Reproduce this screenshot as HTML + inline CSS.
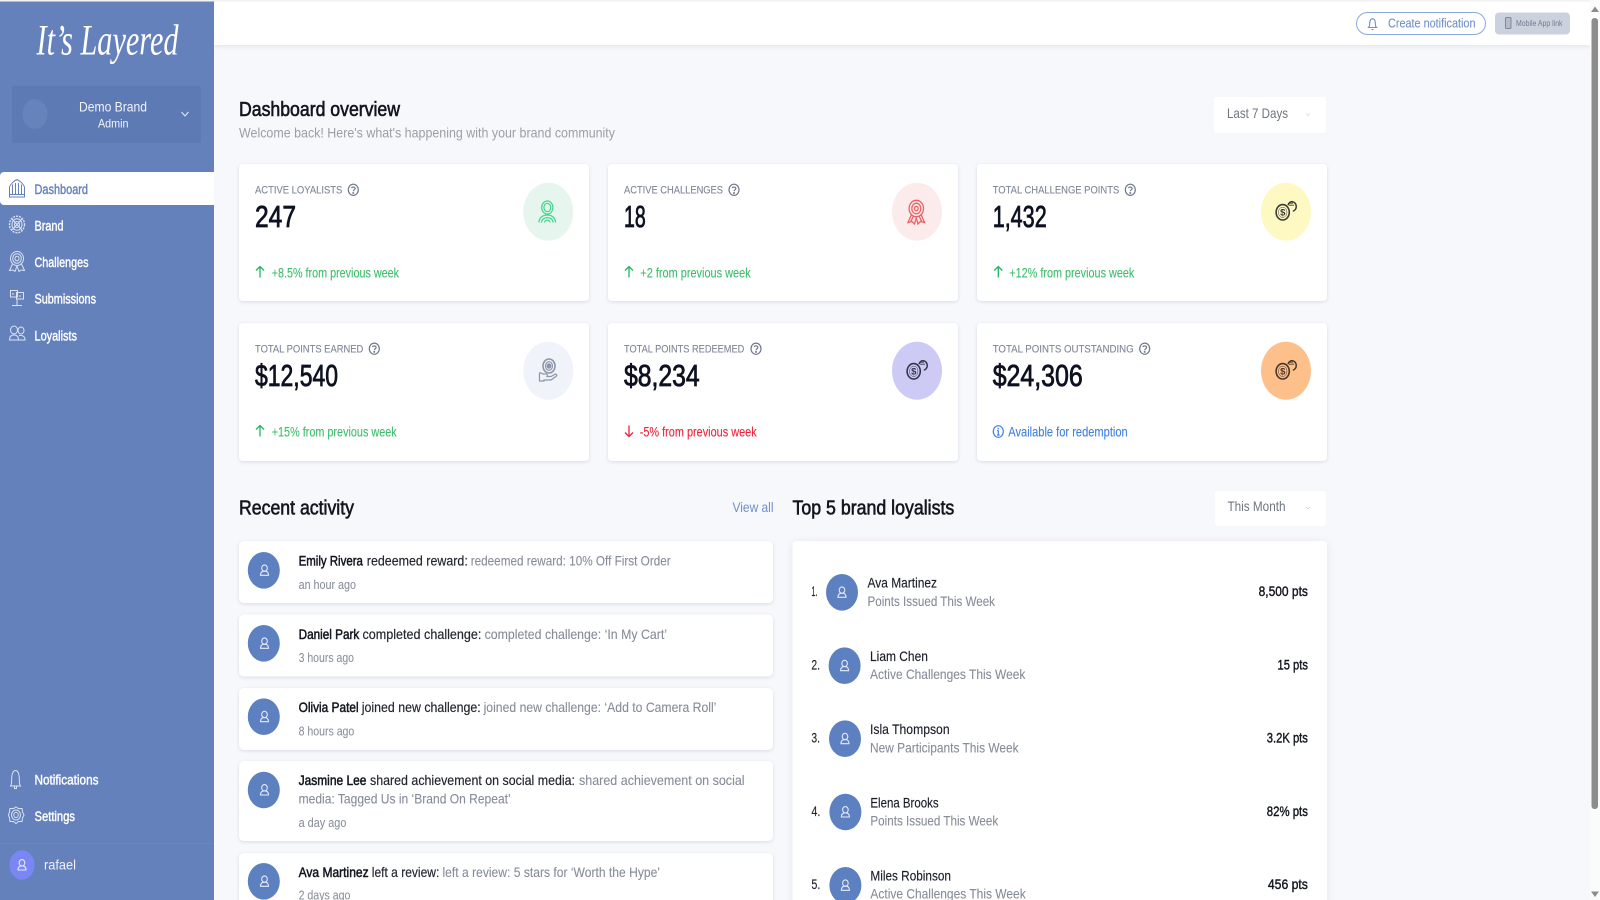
<!DOCTYPE html>
<html lang="en">
<head>
<meta charset="utf-8">
<title>It's Layered - Dashboard</title>
<style>
html,body{margin:0;padding:0;width:1600px;height:900px;overflow:hidden;background:#f7f8fc}
svg{display:block;position:absolute;left:0;top:0}
text{font-family:"Liberation Sans",sans-serif;white-space:pre}
.nav{font-size:13.5px;fill:#fff;stroke:#fff;stroke-width:.4px}
.lab{font-size:11.2px;fill:#7f8696;stroke:#7f8696;stroke-width:.12px}
.val{font-size:30.5px;fill:#0d1120;stroke:#0d1120;stroke-width:.8px}
.up{font-size:14px;fill:#3ebd6b;stroke:#3ebd6b;stroke-width:.12px}
.dn{font-size:14px;fill:#f0213a;stroke:#f0213a;stroke-width:.12px}
.inf{font-size:14px;fill:#3f7fe0;stroke:#3f7fe0;stroke-width:.12px}
.h{font-size:20px;fill:#12151f;stroke:#12151f;stroke-width:.6px}
.b{font-size:13.8px;fill:#12151f;stroke:#12151f;stroke-width:.5px}
.d{font-size:13.8px;fill:#23262f;stroke:#23262f;stroke-width:.18px}
.g{font-size:13.8px;fill:#868c98;stroke:#868c98;stroke-width:.1px}
.t{font-size:12.5px;fill:#8a909b;stroke:#8a909b;stroke-width:.08px}
.n{font-size:13.8px;fill:#1b1e28;stroke:#1b1e28;stroke-width:.15px}
.s{font-size:13.8px;fill:#868c98;stroke:#868c98;stroke-width:.1px}
.p{font-size:13.8px;fill:#12151f;stroke:#12151f;stroke-width:.4px}
.r{font-size:13.5px;fill:#23262f;stroke:#23262f;stroke-width:.15px}
</style>
</head>
<body>
<svg width="1600" height="900" viewBox="0 0 1600 900" xmlns="http://www.w3.org/2000/svg">
<defs>
<filter id="sh" x="-5%" y="-10%" width="110%" height="125%"><feDropShadow dx="0" dy="1" stdDeviation="1.8" flood-color="#1c2440" flood-opacity=".12"/></filter>
<filter id="shh" x="-1%" y="0" width="102%" height="130%"><feDropShadow dx="0" dy="1.5" stdDeviation="2" flood-color="#1c2440" flood-opacity=".08"/></filter>
<filter id="shb" x="-5%" y="-5%" width="110%" height="110%"><feDropShadow dx="0" dy="1" stdDeviation="4" flood-color="#1c2440" flood-opacity=".08"/></filter>
<g id="user" fill="none" stroke="#e4eaf6" stroke-width="1.1"><ellipse cx="0" cy="-2.2" rx="2.8" ry="3.2"/><path d="M-4 5C-4 1.6-2 .8 0 .8S4 1.6 4 5Z"/></g>
<g id="help" fill="none" stroke="#6f7789" stroke-width="1.2"><ellipse cx="0" cy="0" rx="5" ry="5.6"/><path d="M-1.7-1.6C-1.6-3.2 1.8-3.2 1.8-1.2 1.8 0 0 .1 0 1.5" /><circle cx="0" cy="3.2" r=".4"/></g>
<g id="coin" fill="none"><ellipse cx="-3.3" cy=".6" rx="6.6" ry="7.7" stroke-width="1.6"/><ellipse cx="-3.3" cy=".6" rx="4.3" ry="5.2" stroke-width=".5"/><path d="M2 -6.5A4.2 4.8 0 1 1 6.8 -.5" stroke-width="1.5"/><path d="M3 -8.5H7M3 -6.5H8" stroke-width=".8"/><text x="-3.3" y="4" text-anchor="middle" style="font-size:9.5px;font-weight:bold;stroke-width:0" fill="currentColor">$</text></g>
<path id="upa" d="M0-5.5V5.5M-4-1.5L0-5.5L4-1.5" fill="none" stroke-width="1.3"/>
<path id="chev" d="M-3.5-2L0 2L3.5-2" fill="none" stroke-width="1"/>
</defs>

<!-- page base -->
<rect width="1600" height="900" fill="#f7f8fc"/>
<rect width="1600" height="1.5" fill="#f2f2f2"/>

<!-- header -->
<rect x="214" y="2" width="1376" height="43" fill="#fff" filter="url(#shh)"/>
<rect x="1356.5" y="12.5" width="129" height="22" rx="11" fill="#fff" stroke="#8aa9dc" stroke-width="1"/>
<path d="M1368.500 27.500c1.500-1.500 1-3.500 1.300-5.500.3-2 1.300-3.200 2.700-3.200s2.400 1.200 2.700 3.200c.3 2-.2 4 1.300 5.500zM1371.500 29.500h2" fill="none" stroke="#6f8fc8" stroke-width="1.100"/>
<text x="1388" y="27.500" textLength="87.500" lengthAdjust="spacingAndGlyphs" style="font-size:12.800px;stroke:#6f8fc8;stroke-width:.1px" fill="#6f8fc8">Create notification</text>
<rect x="1495" y="12.500" width="75" height="22" rx="4" fill="#ccd2dd"/>
<rect x="1505.500" y="17.500" width="5.500" height="11" rx="1" fill="#b4bdcb" stroke="#7d8899" stroke-width="1"/>
<text x="1516" y="26" textLength="46.500" lengthAdjust="spacingAndGlyphs" style="font-size:7.800px" fill="#6f7a8c">Mobile App link</text>

<!-- scrollbar -->
<rect x="1590" y="0" width="10" height="900" fill="#fbfbfb"/>
<path d="M1591 12L1595 6.500L1599 12Z" fill="#8c8c8c"/>
<rect x="1591.500" y="18" width="6.500" height="791" rx="3" fill="#8c8c8c"/>
<path d="M1591 891.500L1595 897L1599 891.500Z" fill="#8c8c8c"/>

<!-- sidebar -->
<rect x="0" y="1.500" width="214" height="898.500" fill="#6581bb"/>
<text x="36.500" y="54.500" textLength="142" lengthAdjust="spacingAndGlyphs" style="font-family:'Liberation Serif',serif;font-style:italic;font-size:43px" fill="#fff">It’s Layered</text>
<rect x="12" y="86" width="189" height="57" rx="2" fill="#5d7ab5"/>
<ellipse cx="35" cy="114" rx="12.500" ry="15" fill="#6683bb"/>
<text x="79" y="111.500" textLength="68" lengthAdjust="spacingAndGlyphs" style="font-size:13.800px" fill="#f0f3fa">Demo Brand</text>
<text x="98" y="127.500" textLength="30.500" lengthAdjust="spacingAndGlyphs" style="font-size:11.800px" fill="#f0f3fa">Admin</text>
<use href="#chev" x="185" y="114" stroke="#e6ebf5" style="stroke-width:1.100px"/>

<path d="M4 172H214V205H4A4 4 0 0 1 0 201V176A4 4 0 0 1 4 172Z" fill="#fff"/>
<g fill="none" stroke="#6581bb" stroke-width="1">
<path d="M9.500 197V187C10.500 184 14 181 17 179.500C20 181 23.500 184 24.500 187V197ZM9.500 194.500H24.500M12.500 194.500V184.500M21.500 194.500V184.500M15.500 194.500V183M18.500 194.500V183" />
</g>
<text class="nav" x="34.500" y="194" textLength="53.500" lengthAdjust="spacingAndGlyphs" style="fill:#6581bb;stroke:#6581bb">Dashboard</text>

<g fill="none" stroke="#dbe2f0" stroke-width="1">
<ellipse cx="17" cy="224.500" rx="7.500" ry="8.300" stroke-dasharray="2 1" stroke-width="1.400"/>
<ellipse cx="17" cy="224.500" rx="5" ry="5.800"/>
<ellipse cx="17" cy="224.500" rx="2.500" ry="3"/>
<path d="M12 219l10 11M22 219l-10 11"/>
<ellipse cx="17" cy="258.500" rx="6.500" ry="7"/><ellipse cx="17" cy="258.500" rx="4.300" ry="4.800"/><ellipse cx="17" cy="258.500" rx="2" ry="2.300"/>
<path d="M12.500 264L9.500 270.500L13 270L15 271.500L17 266L19 271.500L21 270L24.500 270.500L21.500 264"/>
<rect x="10.500" y="290.500" width="7" height="6.500"/><rect x="16.500" y="292.500" width="7" height="6.500"/>
<path d="M17 299V305M12 305.500H22M13 293V295M20 295V297"/>
<ellipse cx="14" cy="330" rx="3.500" ry="4"/><ellipse cx="21" cy="330.500" rx="3" ry="3.500"/>
<path d="M9.500 340C9.500 336 11.500 335 14 335S18.500 336 18.500 340ZM19 335.500C22 335 25 336 25 340H19"/>
<path d="M11 786H21C19.500 784 20 781 19.700 777C19.500 773 18 770.500 16 770.500S12.500 773 12.300 777C12 781 12.500 784 11 786ZM15 786.500V788.500H17V786.500" transform="translate(-.5 0)"/>
<path d="M16 807L18.500 808.500L22 808.500L22.500 812L24 815L22.500 818L22 821.500L18.500 821.500L16 823.500L13.500 821.500L10 821.500L9.500 818L8.500 815L9.500 812L10 808.500L13.500 808.500Z"/>
<ellipse cx="16" cy="815" rx="4.500" ry="5"/><ellipse cx="16" cy="815" rx="2.300" ry="2.600"/>
</g>
<text class="nav" x="34.500" y="230.500" textLength="29" lengthAdjust="spacingAndGlyphs">Brand</text>
<text class="nav" x="34.500" y="267" textLength="54" lengthAdjust="spacingAndGlyphs">Challenges</text>
<text class="nav" x="34.500" y="303.500" textLength="61.500" lengthAdjust="spacingAndGlyphs">Submissions</text>
<text class="nav" x="34.500" y="340.500" textLength="42.500" lengthAdjust="spacingAndGlyphs">Loyalists</text>
<text class="nav" x="34.500" y="784.500" textLength="64" lengthAdjust="spacingAndGlyphs">Notifications</text>
<text class="nav" x="34.500" y="821" textLength="40.500" lengthAdjust="spacingAndGlyphs">Settings</text>
<rect x="0" y="843" width="214" height="1" fill="#6a86bf"/>
<ellipse cx="22" cy="865" rx="12.500" ry="14.700" fill="#7b86f5"/>
<use href="#user" x="22" y="865"/>
<text x="44" y="869.500" textLength="32" lengthAdjust="spacingAndGlyphs" style="font-size:13.800px" fill="#eef1f8">rafael</text>

<!-- overview header -->
<text class="h" x="239" y="116" textLength="161" lengthAdjust="spacingAndGlyphs">Dashboard overview</text>
<text x="239" y="137.500" textLength="376" lengthAdjust="spacingAndGlyphs" style="font-size:13.800px" fill="#9a9ea6">Welcome back! Here's what's happening with your brand community</text>
<rect x="1214" y="97" width="112" height="36" rx="3" fill="#fff"/>
<text x="1227" y="118" textLength="61" lengthAdjust="spacingAndGlyphs" style="font-size:13.800px" fill="#6f747e">Last 7 Days</text>
<use href="#chev" x="1308" y="114.500" stroke="#b0b4bc" transform="translate(654 57.250) scale(.5)" style="stroke-width:1.500px"/>

<!-- stat cards -->
<g fill="#fff" filter="url(#sh)">
<rect x="239" y="164" width="350" height="137" rx="4"/>
<rect x="608" y="164" width="350" height="137" rx="4"/>
<rect x="977" y="164" width="350" height="137" rx="4"/>
<rect x="239" y="323" width="350" height="138" rx="4"/>
<rect x="608" y="323" width="350" height="138" rx="4"/>
<rect x="977" y="323" width="350" height="138" rx="4"/>
</g>

<ellipse cx="548.300" cy="211.700" rx="25" ry="29" fill="#e6f6ee"/>
<ellipse cx="917" cy="211.700" rx="25" ry="29" fill="#fbeceb"/>
<ellipse cx="1286" cy="211.700" rx="25" ry="29" fill="#fef9c3"/>
<ellipse cx="548.300" cy="370.700" rx="25" ry="29" fill="#f0f3f9"/>
<ellipse cx="917" cy="370.700" rx="25" ry="29" fill="#cdcbf6"/>
<ellipse cx="1286" cy="370.700" rx="25" ry="29" fill="#fdc08a"/>

<!-- green person -->
<g fill="none" stroke="#3fd68a" stroke-width="1.200">
<ellipse cx="547.300" cy="207.500" rx="5.600" ry="6.500"/><ellipse cx="547.300" cy="207.500" rx="3.400" ry="4.200"/>
<path d="M539 222.500C539 212.500 555.500 212.500 555.500 222.500M541.500 222.500C541.500 216 553 216 553 222.500M544.500 222.500C544.500 219.500 550 219.500 550 222.500"/>
</g>
<!-- red ribbon -->
<g fill="none" stroke="#ee5f65" stroke-width="1.300">
<ellipse cx="916.300" cy="208.500" rx="7.200" ry="8.200"/><ellipse cx="916.300" cy="208.500" rx="4.500" ry="5.300"/><ellipse cx="916.300" cy="208.500" rx="1.800" ry="2.200"/>
<path d="M911.500 214.500L908 222.500L912 221.500L914.500 224L916.300 218L918 224L920.500 221.500L924.500 222.500L921 214.500M913.500 216L910.500 222M919 216L922 222"/>
</g>
<!-- hand coin -->
<g fill="none" stroke="#8d96a8" stroke-width="1.200">
<ellipse cx="549" cy="366" rx="6" ry="7" stroke-width="1.600"/><ellipse cx="549" cy="366" rx="3.500" ry="4.300"/><ellipse cx="549" cy="366" rx="1.800" ry="2.200" fill="#8d96a8"/>
<path d="M539.500 373V381H544V380H551L556.500 376C557.500 375 556 373.500 554.500 374.500L551 376.500H547C548 375 547 374 546 374H543L541 373Z"/>
</g>
<g color="#3a3a32" stroke="#3a3a32"><use href="#coin" x="1286" y="211.700"/></g>
<g color="#35354a" stroke="#35354a"><use href="#coin" x="917" y="370.700"/></g>
<g color="#4a3526" stroke="#4a3526"><use href="#coin" x="1286" y="370.700"/></g>

<!-- labels -->
<text class="lab" x="255" y="193.500" textLength="87.300" lengthAdjust="spacingAndGlyphs">ACTIVE LOYALISTS</text>
<use href="#help" x="353.300" y="189.800"/>
<text class="lab" x="624" y="193.500" textLength="99" lengthAdjust="spacingAndGlyphs">ACTIVE CHALLENGES</text>
<use href="#help" x="734" y="189.800"/>
<text class="lab" x="992.700" y="193.500" textLength="126.600" lengthAdjust="spacingAndGlyphs">TOTAL CHALLENGE POINTS</text>
<use href="#help" x="1130.300" y="189.800"/>
<text class="lab" x="255" y="352.500" textLength="108.300" lengthAdjust="spacingAndGlyphs">TOTAL POINTS EARNED</text>
<use href="#help" x="374.300" y="348.700"/>
<text class="lab" x="624" y="352.500" textLength="120.300" lengthAdjust="spacingAndGlyphs">TOTAL POINTS REDEEMED</text>
<use href="#help" x="756" y="348.700"/>
<text class="lab" x="992.700" y="352.500" textLength="141" lengthAdjust="spacingAndGlyphs">TOTAL POINTS OUTSTANDING</text>
<use href="#help" x="1144.700" y="348.700"/>

<!-- values -->
<text class="val" x="255" y="227" textLength="41" lengthAdjust="spacingAndGlyphs">247</text>
<text class="val" x="624" y="227" textLength="21.700" lengthAdjust="spacingAndGlyphs">18</text>
<text class="val" x="992.700" y="227" textLength="54" lengthAdjust="spacingAndGlyphs">1,432</text>
<text class="val" x="255" y="386" textLength="83" lengthAdjust="spacingAndGlyphs">$12,540</text>
<text class="val" x="624" y="386" textLength="75.700" lengthAdjust="spacingAndGlyphs">$8,234</text>
<text class="val" x="992.700" y="386" textLength="90" lengthAdjust="spacingAndGlyphs">$24,306</text>

<!-- trends -->
<use href="#upa" x="260" y="272" stroke="#22b560"/>
<text class="up" x="271.700" y="277.500" textLength="127.300" lengthAdjust="spacingAndGlyphs">+8.5% from previous week</text>
<use href="#upa" x="629" y="272" stroke="#22b560"/>
<text class="up" x="640.300" y="277.500" textLength="110.400" lengthAdjust="spacingAndGlyphs">+2 from previous week</text>
<use href="#upa" x="998.300" y="272" stroke="#22b560"/>
<text class="up" x="1009.300" y="277.500" textLength="125" lengthAdjust="spacingAndGlyphs">+12% from previous week</text>
<use href="#upa" x="260" y="431" stroke="#22b560"/>
<text class="up" x="271.700" y="436.500" textLength="125" lengthAdjust="spacingAndGlyphs">+15% from previous week</text>
<use href="#upa" x="-629" y="-431" stroke="#f0213a" transform="scale(-1 -1)"/>
<text class="dn" x="639.700" y="436.500" textLength="117" lengthAdjust="spacingAndGlyphs">-5% from previous week</text>
<g fill="none" stroke="#3f7fe0" stroke-width="1.200"><ellipse cx="998.300" cy="431.500" rx="5" ry="5.800"/><path d="M998.300 430.500V435M997 430.500H998.300M997 435H999.600"/><circle cx="998.300" cy="428.500" r=".3"/></g>
<text class="inf" x="1008.300" y="436.500" textLength="119.400" lengthAdjust="spacingAndGlyphs">Available for redemption</text>

<!-- section headers -->
<text class="h" x="239" y="514.500" textLength="115" lengthAdjust="spacingAndGlyphs">Recent activity</text>
<text x="732.500" y="512" textLength="41" lengthAdjust="spacingAndGlyphs" style="font-size:13.800px" fill="#6e8fca">View all</text>
<text class="h" x="792.500" y="514.500" textLength="161.800" lengthAdjust="spacingAndGlyphs">Top 5 brand loyalists</text>
<rect x="1215" y="491" width="111" height="35" rx="3" fill="#fff"/>
<text x="1227.500" y="511" textLength="58" lengthAdjust="spacingAndGlyphs" style="font-size:13.800px" fill="#6f747e">This Month</text>
<use href="#chev" x="1308" y="508" stroke="#b0b4bc" transform="translate(654 254) scale(.5)" style="stroke-width:1.500px"/>

<!-- activity cards -->
<g fill="#fff" filter="url(#sh)">
<rect x="239" y="541" width="534" height="62" rx="5"/>
<rect x="239" y="614.500" width="534" height="62" rx="5"/>
<rect x="239" y="688" width="534" height="62" rx="5"/>
<rect x="239" y="761" width="534" height="80" rx="5"/>
<rect x="239" y="853" width="534" height="70" rx="5"/>
</g>
<g fill="#5d80c0">
<ellipse cx="263.800" cy="570.300" rx="16" ry="18.300"/>
<ellipse cx="263.800" cy="643.300" rx="16" ry="18.300"/>
<ellipse cx="263.800" cy="716.700" rx="16" ry="18.300"/>
<ellipse cx="263.800" cy="790" rx="16" ry="18.300"/>
<ellipse cx="263.800" cy="881.300" rx="16" ry="18.300"/>
</g>
<use href="#user" x="264.500" y="570.300"/><use href="#user" x="264.500" y="643.300"/><use href="#user" x="264.500" y="716.700"/><use href="#user" x="264.500" y="790"/><use href="#user" x="264.500" y="881.300"/>

<text class="b" x="298.600" y="565.300" textLength="64.300" lengthAdjust="spacingAndGlyphs">Emily Rivera</text>
<text class="d" x="366.800" y="565.300" textLength="101" lengthAdjust="spacingAndGlyphs">redeemed reward:</text>
<text class="g" x="470.700" y="565.300" textLength="200" lengthAdjust="spacingAndGlyphs">redeemed reward: 10% Off First Order</text>
<text class="t" x="298.600" y="589" textLength="57.400" lengthAdjust="spacingAndGlyphs">an hour ago</text>

<text class="b" x="298.600" y="638.800" textLength="60.700" lengthAdjust="spacingAndGlyphs">Daniel Park</text>
<text class="d" x="362.500" y="638.800" textLength="118.900" lengthAdjust="spacingAndGlyphs">completed challenge:</text>
<text class="g" x="484.600" y="638.800" textLength="182.400" lengthAdjust="spacingAndGlyphs">completed challenge: ‘In My Cart’</text>
<text class="t" x="298.600" y="662" textLength="55.400" lengthAdjust="spacingAndGlyphs">3 hours ago</text>

<text class="b" x="298.600" y="711.800" textLength="60" lengthAdjust="spacingAndGlyphs">Olivia Patel</text>
<text class="d" x="361.800" y="711.800" textLength="118.900" lengthAdjust="spacingAndGlyphs">joined new challenge:</text>
<text class="g" x="483.600" y="711.800" textLength="232.800" lengthAdjust="spacingAndGlyphs">joined new challenge: ‘Add to Camera Roll’</text>
<text class="t" x="298.600" y="735.300" textLength="55.700" lengthAdjust="spacingAndGlyphs">8 hours ago</text>

<text class="b" x="298.600" y="785.200" textLength="67.800" lengthAdjust="spacingAndGlyphs">Jasmine Lee</text>
<text class="d" x="370" y="785.200" textLength="205" lengthAdjust="spacingAndGlyphs">shared achievement on social media:</text>
<text class="g" x="579" y="785.200" textLength="165.600" lengthAdjust="spacingAndGlyphs">shared achievement on social</text>
<text class="g" x="298.600" y="803.500" textLength="212.100" lengthAdjust="spacingAndGlyphs">media: Tagged Us in ‘Brand On Repeat’</text>
<text class="t" x="298.600" y="827" textLength="47.800" lengthAdjust="spacingAndGlyphs">a day ago</text>

<text class="b" x="298.600" y="876.800" textLength="70" lengthAdjust="spacingAndGlyphs">Ava Martinez</text>
<text class="d" x="371.800" y="876.800" textLength="67.500" lengthAdjust="spacingAndGlyphs">left a review:</text>
<text class="g" x="442.500" y="876.800" textLength="217.500" lengthAdjust="spacingAndGlyphs">left a review: 5 stars for ‘Worth the Hype’</text>
<text class="t" x="298.600" y="899.500" textLength="51.800" lengthAdjust="spacingAndGlyphs">2 days ago</text>

<!-- loyalists -->
<rect x="792.500" y="541" width="534.500" height="380" rx="4" fill="#fff" filter="url(#shb)"/>
<g fill="#5d80c0">
<ellipse cx="842" cy="592.300" rx="16" ry="18.300"/>
<ellipse cx="844.600" cy="665.700" rx="16" ry="18.300"/>
<ellipse cx="845" cy="738.700" rx="16" ry="18.300"/>
<ellipse cx="845.400" cy="812" rx="16" ry="18.300"/>
<ellipse cx="845.400" cy="885.300" rx="16" ry="18.300"/>
</g>
<use href="#user" x="842" y="592.300"/><use href="#user" x="844.600" y="665.700"/><use href="#user" x="845" y="738.700"/><use href="#user" x="845.400" y="812"/><use href="#user" x="845.400" y="885.300"/>

<text class="r" x="811.400" y="596" textLength="6.200" lengthAdjust="spacingAndGlyphs">1.</text>
<text class="n" x="867.500" y="587.500" textLength="69.500" lengthAdjust="spacingAndGlyphs">Ava Martinez</text>
<text class="s" x="867.500" y="605.800" textLength="127.500" lengthAdjust="spacingAndGlyphs">Points Issued This Week</text>
<text class="p" x="1258.600" y="596.200" textLength="49.300" lengthAdjust="spacingAndGlyphs">8,500 pts</text>

<text class="r" x="811.400" y="669.300" textLength="8.600" lengthAdjust="spacingAndGlyphs">2.</text>
<text class="n" x="870" y="660.800" textLength="57.900" lengthAdjust="spacingAndGlyphs">Liam Chen</text>
<text class="s" x="870" y="679" textLength="155.400" lengthAdjust="spacingAndGlyphs">Active Challenges This Week</text>
<text class="p" x="1277.500" y="669.500" textLength="30.400" lengthAdjust="spacingAndGlyphs">15 pts</text>

<text class="r" x="811.400" y="742.500" textLength="8.600" lengthAdjust="spacingAndGlyphs">3.</text>
<text class="n" x="870" y="734" textLength="79.600" lengthAdjust="spacingAndGlyphs">Isla Thompson</text>
<text class="s" x="870" y="752.300" textLength="148.600" lengthAdjust="spacingAndGlyphs">New Participants This Week</text>
<text class="p" x="1266.800" y="742.700" textLength="41.100" lengthAdjust="spacingAndGlyphs">3.2K pts</text>

<text class="r" x="811.400" y="815.800" textLength="9" lengthAdjust="spacingAndGlyphs">4.</text>
<text class="n" x="870.400" y="807.300" textLength="68.200" lengthAdjust="spacingAndGlyphs">Elena Brooks</text>
<text class="s" x="870.400" y="825.500" textLength="127.800" lengthAdjust="spacingAndGlyphs">Points Issued This Week</text>
<text class="p" x="1266.800" y="816" textLength="41.100" lengthAdjust="spacingAndGlyphs">82% pts</text>

<text class="r" x="811.400" y="889" textLength="9" lengthAdjust="spacingAndGlyphs">5.</text>
<text class="n" x="870.400" y="880.500" textLength="80.600" lengthAdjust="spacingAndGlyphs">Miles Robinson</text>
<text class="s" x="870.400" y="898.700" textLength="155.300" lengthAdjust="spacingAndGlyphs">Active Challenges This Week</text>
<text class="p" x="1267.900" y="889.200" textLength="40" lengthAdjust="spacingAndGlyphs">456 pts</text>
</svg>
</body>
</html>
